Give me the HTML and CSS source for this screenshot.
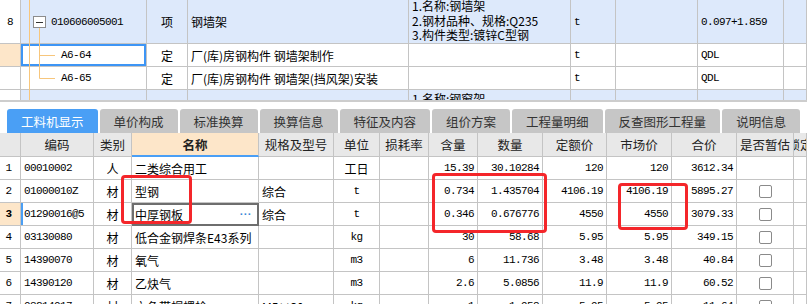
FILE: index.html
```html
<!DOCTYPE html>
<html>
  <head>
    <title>工料机显示</title>
    <link rel="stylesheet" href="styles.css">
  </head>
  <body>
    <div class="sheet">
      <!-- bill items (upper grid) -->
      <div class="bill">
        <div class="row tall item">
          <div class="c idx num">8</div>
          <div class="c code num lvl1">010606005001</div>
          <div class="c ctr">项</div>
          <div class="c">钢墙架</div>
          <div class="c feat">
            <div>1.名称:钢墙架</div>
            <div>2.钢材品种、规格:Q235</div>
            <div>3.构件类型:镀锌C型钢</div>
          </div>
          <div class="c num">t</div>
          <div class="c"></div>
          <div class="c num">0.097+1.859</div>
          <div class="c"></div>
        </div>
        <div class="row">
          <div class="c idx cur"></div>
          <div class="c code num lvl2 picked">A6-64</div>
          <div class="c ctr">定</div>
          <div class="c">厂(库)房钢构件 钢墙架制作</div>
          <div class="c"></div>
          <div class="c num">t</div>
          <div class="c"></div>
          <div class="c num">QDL</div>
          <div class="c"></div>
        </div>
        <div class="row">
          <div class="c idx"></div>
          <div class="c code num lvl2">A6-65</div>
          <div class="c ctr">定</div>
          <div class="c">厂(库)房钢构件 钢墙架(挡风架)安装</div>
          <div class="c"></div>
          <div class="c num">t</div>
          <div class="c"></div>
          <div class="c num">QDL</div>
          <div class="c"></div>
        </div>
        <div class="row cut item">
          <div class="c idx"></div>
          <div class="c"></div>
          <div class="c"></div>
          <div class="c"></div>
          <div class="c feat"><div>1.名称:钢窗架</div></div>
          <div class="c"></div>
          <div class="c"></div>
          <div class="c"></div>
          <div class="c"></div>
        </div>
        <svg class="tree" width="60" height="100" viewBox="0 0 60 100">
          <line x1="29.5" y1="0" x2="29.5" y2="100" stroke="#f7c67c" />
          <line x1="39.5" y1="28" x2="39.5" y2="78.5" stroke="#f7c67c" />
          <line x1="39.5" y1="55.5" x2="55" y2="55.5" stroke="#f7c67c" />
          <line x1="39.5" y1="78.5" x2="55" y2="78.5" stroke="#f7c67c" />
          <rect x="33.5" y="16.5" width="12" height="11" fill="#fff" stroke="#8c8c8c" />
          <line x1="36" y1="22.5" x2="43" y2="22.5" stroke="#333" />
        </svg>
      </div>

      <div class="splitter"></div>

      <div class="tabs">
        <div class="tab on">工料机显示</div>
        <div class="tab">单价构成</div>
        <div class="tab">标准换算</div>
        <div class="tab">换算信息</div>
        <div class="tab">特征及内容</div>
        <div class="tab">组价方案</div>
        <div class="tab">工程量明细</div>
        <div class="tab">反查图形工程量</div>
        <div class="tab">说明信息</div>
      </div>

      <!-- resources (lower grid) -->
      <div class="res">
        <div class="row head">
          <div class="c"></div>
          <div class="c">编码</div>
          <div class="c">类别</div>
          <div class="c sorted">名称</div>
          <div class="c">规格及型号</div>
          <div class="c">单位</div>
          <div class="c">损耗率</div>
          <div class="c">含量</div>
          <div class="c">数量</div>
          <div class="c">定额价</div>
          <div class="c">市场价</div>
          <div class="c">合价</div>
          <div class="c">是否暂估</div>
          <div class="c">锁定</div>
        </div>
        <div class="row">
          <div class="c idx num">1</div>
          <div class="c num left">00010002</div>
          <div class="c ctr">人</div>
          <div class="c">二类综合用工</div>
          <div class="c"></div>
          <div class="c ctr">工日</div>
          <div class="c"></div>
          <div class="c num">15.39</div>
          <div class="c num">30.10284</div>
          <div class="c num">120</div>
          <div class="c num">120</div>
          <div class="c num">3612.34</div>
          <div class="c"></div>
          <div class="c"></div>
        </div>
        <div class="row">
          <div class="c idx num">2</div>
          <div class="c num left">01000010Z</div>
          <div class="c ctr">材</div>
          <div class="c">型钢</div>
          <div class="c">综合</div>
          <div class="c ctr num">t</div>
          <div class="c"></div>
          <div class="c num">0.734</div>
          <div class="c num">1.435704</div>
          <div class="c num">4106.19</div>
          <div class="c num">4106.19</div>
          <div class="c num">5895.27</div>
          <div class="c ctr"><span class="box"></span></div>
          <div class="c"></div>
        </div>
        <div class="row">
          <div class="c idx num cur"><b>3</b></div>
          <div class="c num left mark">01290016@5</div>
          <div class="c ctr">材</div>
          <div class="c editing">中厚钢板<span class="more">···</span></div>
          <div class="c">综合</div>
          <div class="c ctr num">t</div>
          <div class="c"></div>
          <div class="c num">0.346</div>
          <div class="c num">0.676776</div>
          <div class="c num">4550</div>
          <div class="c num">4550</div>
          <div class="c num">3079.33</div>
          <div class="c ctr"><span class="box"></span></div>
          <div class="c"></div>
        </div>
        <div class="row">
          <div class="c idx num">4</div>
          <div class="c num left">03130080</div>
          <div class="c ctr">材</div>
          <div class="c">低合金钢焊条E43系列</div>
          <div class="c"></div>
          <div class="c ctr num">kg</div>
          <div class="c"></div>
          <div class="c num">30</div>
          <div class="c num">58.68</div>
          <div class="c num">5.95</div>
          <div class="c num">5.95</div>
          <div class="c num">349.15</div>
          <div class="c ctr"><span class="box"></span></div>
          <div class="c"></div>
        </div>
        <div class="row">
          <div class="c idx num">5</div>
          <div class="c num left">14390070</div>
          <div class="c ctr">材</div>
          <div class="c">氧气</div>
          <div class="c"></div>
          <div class="c ctr num">m3</div>
          <div class="c"></div>
          <div class="c num">6</div>
          <div class="c num">11.736</div>
          <div class="c num">3.48</div>
          <div class="c num">3.48</div>
          <div class="c num">40.84</div>
          <div class="c ctr"><span class="box"></span></div>
          <div class="c"></div>
        </div>
        <div class="row">
          <div class="c idx num">6</div>
          <div class="c num left">14390120</div>
          <div class="c ctr">材</div>
          <div class="c">乙炔气</div>
          <div class="c"></div>
          <div class="c ctr num">m3</div>
          <div class="c"></div>
          <div class="c num">2.6</div>
          <div class="c num">5.0856</div>
          <div class="c num">11.9</div>
          <div class="c num">11.9</div>
          <div class="c num">60.52</div>
          <div class="c ctr"><span class="box"></span></div>
          <div class="c"></div>
        </div>
        <div class="row">
          <div class="c idx num">7</div>
          <div class="c num left">03214017</div>
          <div class="c ctr">材</div>
          <div class="c">六角带帽螺栓</div>
          <div class="c">M5×30</div>
          <div class="c ctr num">kg</div>
          <div class="c"></div>
          <div class="c num">1</div>
          <div class="c num">1.958</div>
          <div class="c num">5.95</div>
          <div class="c num">5.95</div>
          <div class="c num">11.64</div>
          <div class="c ctr"><span class="box"></span></div>
          <div class="c"></div>
        </div>
      </div>

      <!-- red review marks -->
      <div class="note note-name"></div>
      <div class="note note-qty"></div>
      <div class="note note-price"></div>
    </div>
  </body>
</html>
```

FILE: styles.css
```css
* { box-sizing: border-box; }

body {
  margin: 0;
  background: #fff;
  color: #000;
  font-family: "Noto Sans CJK SC", sans-serif;
  font-size: 12px;
}

.sheet {
  position: relative;
  width: 807px;
  height: 304px;
  overflow: hidden;
}

/* shared cell look */
.c {
  display: flex;
  align-items: center;
  padding: 0 3px;
  white-space: nowrap;
  overflow: hidden;
  border-right: 1px solid #c4c4c4;
  border-bottom: 1px solid #c4c4c4;
}
.num {
  font-family: "Liberation Mono", monospace;
  font-size: 11px;
  letter-spacing: -0.6px;
  justify-content: flex-end;
}
.left { justify-content: flex-start; }
.ctr { justify-content: center; }
.idx { justify-content: center; padding: 0; }
.idx.cur { background: #fde6c9 !important; }

/* upper grid */
.bill { position: relative; }
.bill .row {
  display: grid;
  grid-template-columns: 21px 126px 41px 221px 162px 45px 82px 86px 23px;
  height: 23px;
}
.bill .row.tall { height: 44px; }
.bill .row.cut { height: 10px; }
.bill .row.cut .c { border-bottom: none; align-items: flex-start; }
.bill .num { justify-content: flex-start; }
.bill .idx { justify-content: center; }
.bill .item .c { background: #dde9fb; }
.bill .item .c.idx { background: #fff; }
.bill .lvl1 { padding-left: 30px; }
.bill .lvl2 { padding-left: 40px; }
.bill .picked { box-shadow: inset 0 0 0 2px #3d95f5; }

.feat {
  flex-direction: column;
  align-items: flex-start !important;
  justify-content: flex-start;
  line-height: 14.5px;
}
.feat > div { height: 14.5px; }
.feat > div:first-child { margin-top: -1px; }
.bill .cut .feat > div:first-child { margin-top: 2px; }

.tree {
  position: absolute;
  left: 0;
  top: 0;
}

.splitter {
  height: 2px;
  background: #cdcdcd;
  margin-bottom: 7px;
}

/* tab strip */
.tabs {
  display: flex;
  gap: 2px;
  height: 24px;
  padding-left: 7px;
}
.tab {
  display: flex;
  align-items: center;
  padding: 0 14px;
  background: #c6c6c6;
  border-radius: 3px 3px 0 0;
  color: #333;
  font-size: 12.5px;
}
.tab.on { background: #4a9ff5; color: #fff; }

/* lower grid */
.res .row {
  display: grid;
  grid-template-columns: 21px 73px 38px 127px 75px 46px 49px 49px 65px 64px 65px 65px 57px 13px;
  height: 23px;
}
.res .row.head { height: 24px; }
.res .head .c {
  justify-content: center;
  background: #e8e8e8;
  color: #222;
  font-size: 12.5px;
}
.res .head .c.sorted {
  background: #fde6c9;
  font-weight: bold;
  border-bottom: 2px solid #4a9ff5;
}
.res .num { padding-right: 3px; }
.res .left { padding-left: 3px; }
.res .mark { box-shadow: inset 2px 0 0 #4a9ff5; }
.res .editing {
  justify-content: space-between;
  outline: 2px solid #6e6e6e;
  outline-offset: -2px;
}
.more {
  font-family: "Liberation Mono", monospace;
  font-size: 11px;
  font-weight: bold;
  letter-spacing: -2.6px;
  color: #3b8ad9;
  padding-right: 5px;
}

.box {
  width: 13px;
  height: 13px;
  border: 1px solid #8a8a8a;
  border-radius: 2px;
  background: #fff;
}

/* red annotation frames drawn over the grid */
.note {
  position: absolute;
  border: 3px solid #f4262a;
  border-radius: 4px;
}
.note-name { left: 121px; top: 175px; width: 71px; height: 49px; }
.note-qty { left: 432px; top: 173px; width: 115px; height: 60px; }
.note-price { left: 618px; top: 183px; width: 70px; height: 47px; }
```
